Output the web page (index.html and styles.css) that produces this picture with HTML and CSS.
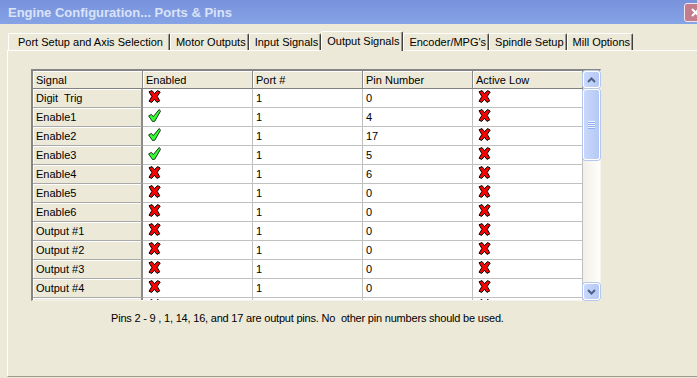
FILE: index.html
```html
<!DOCTYPE html>
<html lang="en">
<head>
  <meta charset="UTF-8" />
  <title>Engine Configuration... Ports &amp; Pins</title>
  <link rel="stylesheet" href="styles.css">
</head>
<body>

  <svg class="defs" width="0" height="0">
    <symbol id="ico-no" viewBox="0 0 13 13">
      <path d="M1 1.8 L4 0.6 L6.5 3.6 L9.6 0.6 L12.2 2 L9.2 6.4 L11.8 10.9 L9 12.4 L6.5 9.4 L3.6 12.4 L1 11.2 L3.9 6.5 Z" fill="#ff0000" stroke="#000" stroke-width="1" stroke-linejoin="round"/>
    </symbol>
    <symbol id="ico-yes" viewBox="0 0 13 13">
      <path d="M0.6 6.9 L3.4 5.4 L5.3 7.6 L11.2 0.5 L12.5 2.2 L6.8 12.2 L4.5 12.5 Z" fill="#33ff33" stroke="#000" stroke-width="0.8" stroke-linejoin="round"/>
    </symbol>
  </svg>

  <div class="titlebar">
    <span class="title">Engine Configuration... Ports &amp; Pins</span>
    <span class="close">
      <svg width="11" height="11" viewBox="0 0 11 11"><path d="M2 2 L9 9 M9 2 L2 9" stroke="#fff" stroke-width="2"/></svg>
    </span>
  </div>

  <div class="client">
    <ul class="tabs">
      <li class="first">Port Setup and Axis Selection</li>
      <li>Motor Outputs</li>
      <li>Input Signals</li>
      <li class="active">Output Signals</li>
      <li>Encoder/MPG's</li>
      <li>Spindle Setup</li>
      <li>Mill Options</li>
    </ul>

    <div class="panel">
      <div class="grid">
        <div class="grid-view">
          <table id="signals">
            <thead>
              <tr>
                <th>Signal</th>
                <th>Enabled</th>
                <th>Port #</th>
                <th>Pin Number</th>
                <th>Active Low</th>
              </tr>
            </thead>
            <tbody></tbody>
          </table>
        </div>
        <div class="vscroll">
          <div class="sb-btn">
            <svg width="9" height="6" viewBox="0 0 9 6"><path d="M1 5 L4.5 1.5 L8 5" fill="none" stroke="#4d6185" stroke-width="2"/></svg>
          </div>
          <div class="sb-thumb"><span class="grip"></span></div>
          <div class="sb-track"></div>
          <div class="sb-btn">
            <svg width="9" height="6" viewBox="0 0 9 6"><path d="M1 1 L4.5 4.5 L8 1" fill="none" stroke="#4d6185" stroke-width="2"/></svg>
          </div>
        </div>
      </div>

      <p class="note">Pins 2 - 9 , 1, 14, 16, and 17 are output pins. No &nbsp;other pin numbers should be used.</p>
    </div>
  </div>

  <script>
    // signal, enabled, port, pin, active low
    const signals = [
      ["Digit&nbsp; Trig", false, 1, 0, false],
      ["Enable1", true, 1, 4, false],
      ["Enable2", true, 1, 17, false],
      ["Enable3", true, 1, 5, false],
      ["Enable4", false, 1, 6, false],
      ["Enable5", false, 1, 0, false],
      ["Enable6", false, 1, 0, false],
      ["Output #1", false, 1, 0, false],
      ["Output #2", false, 1, 0, false],
      ["Output #3", false, 1, 0, false],
      ["Output #4", false, 1, 0, false],
      ["", false, "", "", false] // next row, only its top edge shows
    ];

    function icon(on) {
      return `<svg class="ico"><use href="#${on ? "ico-yes" : "ico-no"}"/></svg>`;
    }

    const body = document.querySelector("#signals tbody");
    signals.forEach((s) => {
      const tr = document.createElement("tr");
      tr.innerHTML = `
        <td class="sig">${s[0]}</td>
        <td class="flag">${icon(s[1])}</td>
        <td>${s[2]}</td>
        <td>${s[3]}</td>
        <td class="flag">${icon(s[4])}</td>
      `;
      body.appendChild(tr);
    });
  </script>
</body>
</html>
```

FILE: styles.css
```css
body {
  margin: 0;
  background: #ece9d8;
  font-family: "Liberation Sans", Arial, sans-serif;
  font-size: 11px;
  color: #000;
  overflow: hidden;
}

.defs {
  position: absolute;
}

/* title bar */
.titlebar {
  height: 24px;
  display: flex;
  align-items: center;
  padding-left: 8px;
  overflow: hidden;
  background: linear-gradient(#7892dc, #86a3e6);
}

.title {
  color: #d9e3f8;
  font-weight: bold;
  font-size: 13px;
}

.close {
  margin-left: auto;
  margin-right: -10px;
  width: 21px;
  height: 17px;
  border: 1px solid #f3e6ea;
  border-radius: 3px;
  background: #c47d8d;
  display: flex;
  align-items: center;
  justify-content: center;
}

/* tabs */
.client {
  padding: 7px 0 0 7px;
}

.tabs {
  display: flex;
  align-items: flex-end;
  list-style: none;
  margin: 0;
  padding: 0 0 0 1px;
}

.tabs li {
  height: 16px;
  line-height: 17px;
  padding: 0 2px 0 5px;
  border-top: 1px solid #fff;
  border-left: 1px solid #fff;
  border-right: 1px solid #404040;
  box-shadow: inset -1px 0 #9d9a8c;
  border-radius: 2px 2px 0 0;
  white-space: nowrap;
}

.tabs li.first {
  padding: 0 6px 0 9px;
}

.tabs li.active {
  height: 19px;
  line-height: 18px;
  padding: 0 3px 0 5px;
  margin-bottom: -1px;
  position: relative;
  z-index: 1;
  background: #ece9d8;
}

/* page */
.panel {
  height: 307px;
  border-top: 1px solid #fff;
  border-left: 1px solid #fff;
  border-bottom: 1px solid #9d9a8c;
  padding: 18px 0 0 23px;
}

.grid {
  display: flex;
  width: 567px;
  height: 229px;
  border-top: 2px solid #858585;
  border-left: 2px solid #858585;
  border-right: 1px solid #f4f3ee;
  border-bottom: 1px solid #f4f3ee;
}

.grid-view {
  width: 550px;
  overflow: hidden;
  background: #fff;
}

#signals {
  width: 550px;
  table-layout: fixed;
  border-collapse: separate;
  border-spacing: 0;
}

#signals th,
#signals td {
  box-sizing: border-box;
  width: 110px;
  height: 19px;
  padding: 0 0 0 3px;
  text-align: left;
  font-weight: normal;
  white-space: nowrap;
  overflow: hidden;
  border-right: 1px solid #c0c0c0;
  border-bottom: 1px solid #c0c0c0;
}

#signals th {
  height: 18px;
  background: #ece9d8;
  border-right-color: #8a8a8a;
  border-bottom-color: #808080;
  box-shadow: inset 1px 1px #fff;
}

#signals td.sig {
  background: #ece9d8;
  border-right: 2px solid #8a8a8a;
  border-bottom-color: #a9a9a9;
  box-shadow: inset 1px 1px #fff;
}

#signals td.flag {
  vertical-align: top;
  padding-top: 1px;
}

.ico {
  display: block;
  width: 13px;
  height: 13px;
  margin-left: 2px;
}

/* scroll bar */
.vscroll {
  width: 17px;
  display: flex;
  flex-direction: column;
  background: linear-gradient(to right, #f1efe7, #fefefb);
}

.sb-btn,
.sb-thumb {
  box-sizing: border-box;
  border: 1px solid #fff;
  border-radius: 3px;
  background: linear-gradient(to right, #c9d8fc, #b5c8f5);
  box-shadow: 0 0 0 1px #b6c7ee;
  display: flex;
  align-items: center;
  justify-content: center;
}

.sb-btn {
  height: 17px;
}

.sb-thumb {
  height: 71px;
  margin-top: 1px;
}

.grip {
  width: 7px;
  height: 8px;
  background: repeating-linear-gradient(#eef3fe 0 1px, #8eaef0 1px 2px);
}

.sb-track {
  flex: 1;
}

.note {
  margin: 11px 0 0 80px;
  line-height: 13px;
  letter-spacing: -0.2px;
}
```
